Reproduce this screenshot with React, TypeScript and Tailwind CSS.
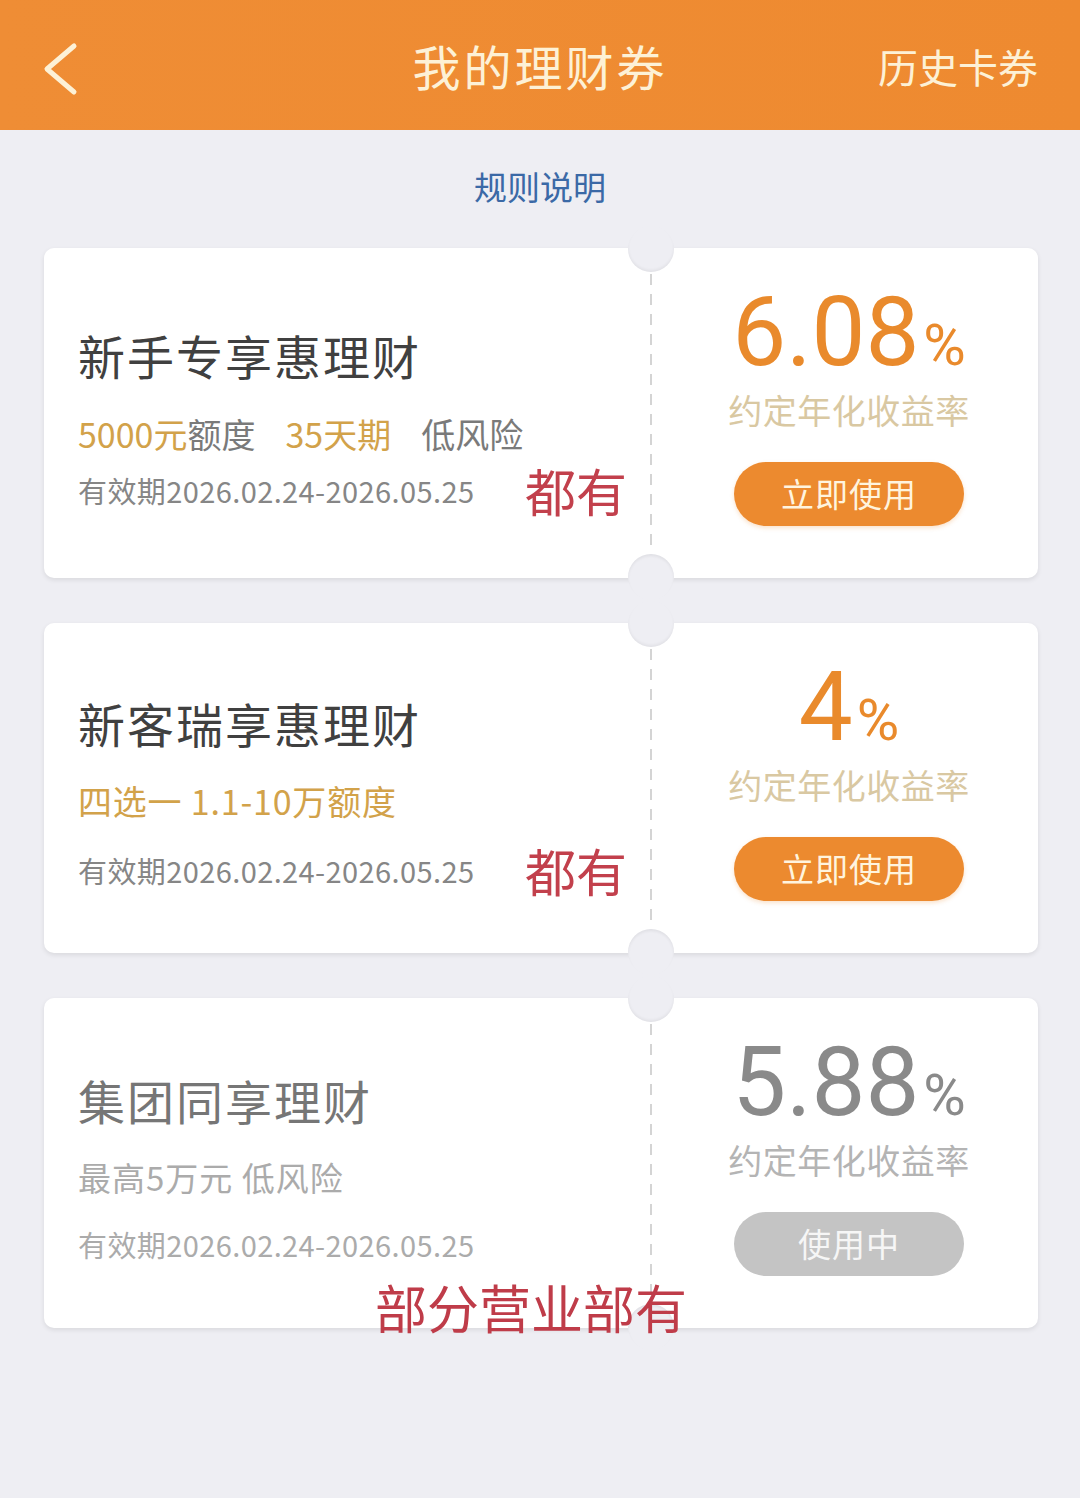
import React from "react";

type CardProps = {
  title: string;
  titleColor: string;
  row2: React.ReactNode;
  date: string;
  dateColor: string;
  tag?: string;
  rate: string;
  rateColor: string;
  labelColor: string;
  active: boolean;
  titleTop: string;
  row2Gap: string;
  dateGap: string;
  overlay?: React.ReactNode;
};

function Card(p: CardProps) {
  return (
    <div className="relative flex h-[330px] rounded-[10px] bg-white shadow-[0_2px_5px_rgba(0,0,0,0.09)]">
      {/* left */}
      <div className={`flex w-[606px] flex-col pl-[34px] pr-[23px] ${p.titleTop}`}>
        <div className={`h-[48px] text-[47px] leading-[48px] tracking-[2px] ${p.titleColor}`}>{p.title}</div>
        <div className={`flex h-[40px] items-center text-[34px] leading-[40px] ${p.row2Gap}`}>{p.row2}</div>
        <div className={`flex h-[36px] items-center ${p.dateGap}`}>
          <span className={`text-[29px] leading-[36px] tracking-[0.4px] ${p.dateColor}`}>{p.date}</span>
          {p.tag && (
            <span className="ml-auto text-[51px] leading-[36px] text-[#c2404c]">{p.tag}</span>
          )}
        </div>
      </div>
      {/* divider */}
      <div className="relative w-[2px]">
        <div className="absolute left-0 top-[26px] bottom-[26px] w-[2px] bg-[linear-gradient(to_bottom,#d4d4d4_55%,transparent_55%)] bg-[length:2px_20px] bg-repeat-y" />
        <div className="absolute left-[-22px] top-[-22px] h-[46px] w-[46px] rounded-full bg-[#eeeef3] shadow-[inset_0_-2px_3px_rgba(0,0,0,0.05)]" />
        <div className="absolute left-[-22px] bottom-[-22px] h-[46px] w-[46px] rounded-full bg-[#eeeef3] shadow-[inset_0_2px_3px_rgba(0,0,0,0.06)]" />
      </div>
      {/* right */}
      <div className="flex flex-1 flex-col items-center pl-[8px] pt-[36px]">
        <div className={`flex h-[96px] items-baseline font-['Roboto',sans-serif] ${p.rateColor}`}>
          <span className="text-[96px] leading-[96px]">{p.rate}</span>
          <span className="ml-[4px] text-[58px] leading-[96px]">%</span>
        </div>
        <div className={`mt-[10px] h-[40px] text-[34px] leading-[40px] tracking-[0.5px] ${p.labelColor}`}>约定年化收益率</div>
        <div
          className={`mt-[32px] flex h-[64px] w-[230px] items-center justify-center rounded-full text-[33px] tracking-[1px] ${
            p.active
              ? "bg-[#ec8a2f] text-[#fff4de] shadow-[0_2px_4px_rgba(236,138,47,0.25)]"
              : "bg-[#c4c4c4] text-[#f6f6f6]"
          }`}
        >
          {p.active ? "立即使用" : "使用中"}
        </div>
      </div>
      {p.overlay}
    </div>
  );
}

export default function App() {
  return (
    <div className="min-h-[1498px] w-[1080px] bg-[#eeeef3] font-['Noto_Sans_CJK_SC','Noto_Sans',sans-serif]">
      {/* header */}
      <div className="relative flex h-[130px] items-center justify-center bg-[linear-gradient(to_right,#ef8d35,#ee8a30)]">
        <svg
          className="absolute left-[40px] top-[42px]"
          width="40"
          height="54"
          viewBox="0 0 40 54"
          fill="none"
        >
          <path d="M34 4 L7 27 L34 50" stroke="#fdf1d6" strokeWidth="5" strokeLinecap="round" strokeLinejoin="round" />
        </svg>
        <div className="text-[48px] leading-[56px] tracking-[3px] text-[#fdf1d6]">我的理财券</div>
        <div className="absolute right-[42px] top-[40px] text-[40px] leading-[52px] text-[#fdf1d6]">历史卡券</div>
      </div>
      {/* rules */}
      <div className="flex h-[118px] items-center justify-center pb-[6px]">
        <span className="text-[33px] leading-[40px] text-[#3b69a6]">规则说明</span>
      </div>
      {/* cards */}
      <div className="flex flex-col gap-[45px] pl-[44px] pr-[42px]">
        <Card
          title="新手专享惠理财"
          titleColor="text-[#404040]"
          row2={
            <>
              <span className="text-[#d2a24a]">5000元</span>
              <span className="text-[#7a7a7a]">额度</span>
              <span className="ml-[30px] text-[#d2a24a]">35天期</span>
              <span className="ml-[30px] text-[#7a7a7a]">低风险</span>
            </>
          }
          date="有效期2026.02.24-2026.05.25"
          dateColor="text-[#868686]"
          tag="都有"
          rate="6.08"
          rateColor="text-[#e98a2c]"
          labelColor="text-[#d9c8a2]"
          active
          titleTop="pt-[83px]"
          row2Gap="mt-[35px]"
          dateGap="mt-[18px]"
        />
        <Card
          title="新客瑞享惠理财"
          titleColor="text-[#404040]"
          row2={<span className="tracking-[0.8px] text-[#d2a24a]">四选一 1.1-10万额度</span>}
          date="有效期2026.02.24-2026.05.25"
          dateColor="text-[#868686]"
          tag="都有"
          rate="4"
          rateColor="text-[#e98a2c]"
          labelColor="text-[#d9c8a2]"
          active
          titleTop="pt-[76px]"
          row2Gap="mt-[34px]"
          dateGap="mt-[31px]"
        />
        <Card
          title="集团同享理财"
          titleColor="text-[#767676]"
          row2={<span className="text-[33px] tracking-[1px] text-[#ababab]">最高5万元 低风险</span>}
          date="有效期2026.02.24-2026.05.25"
          dateColor="text-[#ababab]"
          rate="5.88"
          rateColor="text-[#8a8a8a]"
          labelColor="text-[#b4b4b4]"
          active={false}
          titleTop="pt-[78px]"
          row2Gap="mt-[33px]"
          dateGap="mt-[29px]"
          overlay={
            <div className="absolute left-[331px] top-[279px] z-10 text-[52px] leading-[60px] text-[#bf3c49]">
              部分营业部有
            </div>
          }
        />
      </div>
    </div>
  );
}
